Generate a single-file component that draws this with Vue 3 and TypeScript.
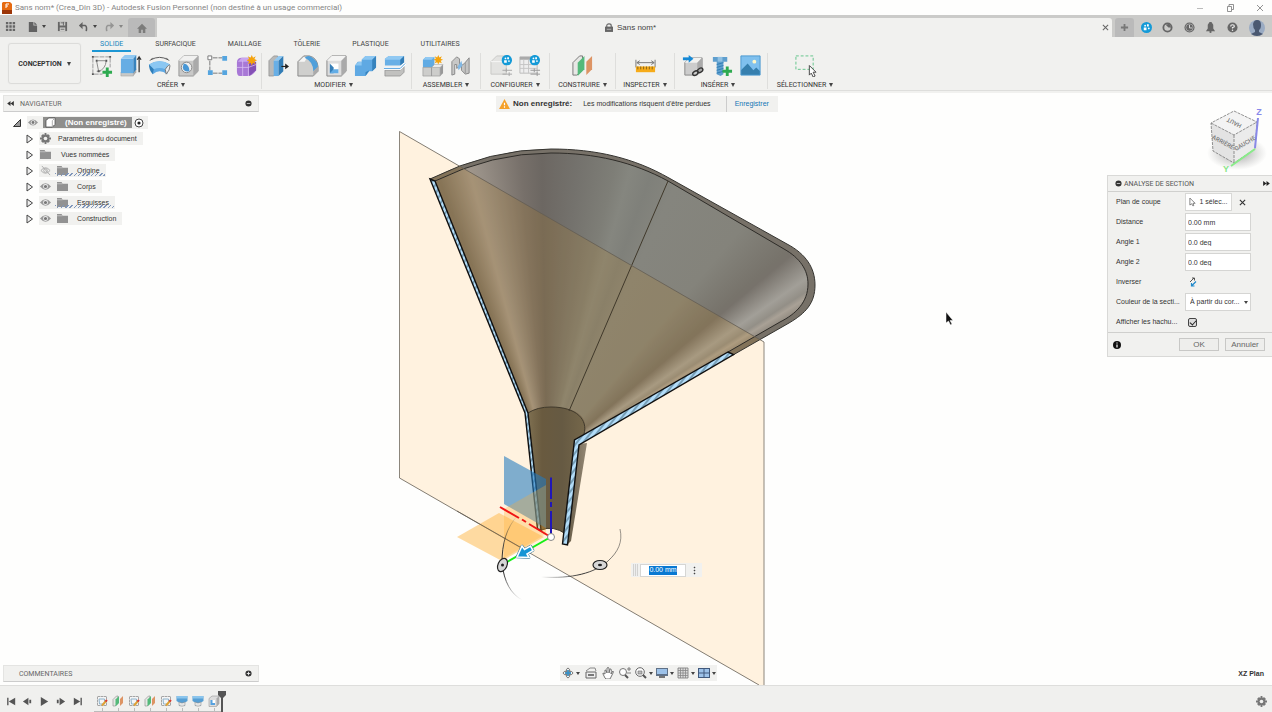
<script setup lang="ts">
import { ref } from 'vue'

interface RibbonGroup { name: string; cls: string; icons: string[] }
interface TreeRow { label: string; icon?: string; eye?: 'on' | 'off'; hatched?: boolean }

const ribbonTabs = ['SOLIDE', 'SURFACIQUE', 'MAILLAGE', 'TÔLERIE', 'PLASTIQUE', 'UTILITAIRES']
const activeTab = ref('SOLIDE')

const groups: RibbonGroup[] = [
  { name: 'CRÉER', cls: 'g6', icons: ['sketch', 'extrude', 'revolve', 'hole', 'pattern', 'form'] },
  { name: 'MODIFIER', cls: 'g5', icons: ['presspull', 'fillet', 'shell', 'combine', 'split'] },
  { name: 'ASSEMBLER', cls: 'g2', icons: ['component', 'joint'] },
  { name: 'CONFIGURER', cls: 'g2', icons: ['config', 'configtable'] },
  { name: 'CONSTRUIRE', cls: 'g1', icons: ['plane'] },
  { name: 'INSPECTER', cls: 'g1 small', icons: ['measure'] },
  { name: 'INSÉRER', cls: 'g3', icons: ['derive', 'bolt', 'image'] },
  { name: 'SÉLECTIONNER', cls: 'g1 large', icons: ['select'] },
]

const tree: TreeRow[] = [
  { label: 'Paramètres du document', icon: 'gear' },
  { label: 'Vues nommées', icon: 'folder' },
  { label: 'Origine', icon: 'folder', eye: 'off', hatched: true },
  { label: 'Corps', icon: 'folder', eye: 'on' },
  { label: 'Esquisses', icon: 'folder', eye: 'on', hatched: true },
  { label: 'Construction', icon: 'folder', eye: 'on' },
]

const navTools = [
  { id: 'orbit', label: 'Orbite', caret: true },
  { id: 'lookat', label: 'Regarder', caret: false },
  { id: 'hand', label: 'Panoramique', caret: false },
  { id: 'zoom', label: 'Zoom', caret: false },
  { id: 'fit', label: 'Ajuster', caret: true },
  { id: 'display', label: 'Affichage', caret: true },
  { id: 'grid', label: 'Grille', caret: true },
  { id: 'views', label: 'Fenêtres', caret: true },
]

const players = ['first', 'prev', 'play', 'next', 'last']
const features = ['t-sketch', 'plane', 't-sketch', 'plane', 't-sketch', 't-loft', 't-loft', 't-shell']

const distance = ref('0.00 mm')
const angle1 = ref('0.0 deg')
const angle2 = ref('0.0 deg')
const hatch = ref(true)
</script>

<template>
  <div class="app">
    <svg class="defs" width="0" height="0" aria-hidden="true">
      <defs>
        <symbol id="sketch" viewBox="0 0 24 24">
          <path d="M4 3H20M3 4V20M21 4V14M4 21H13" fill="none" stroke="#999" stroke-dasharray="5 1" />
          <path d="M2 2h2v2h-2zM20 2h2v2h-2zM2 20h2v2h-2z" fill="#555" />
          <path d="M7 8L9 18Q16 16 17 7M7 18H11M8 7H16" fill="none" stroke="#888" />
          <path d="M6 6h2v2h-2zM16 6h2v2h-2zM8 17h2v2h-2z" fill="#555" />
          <path d="M18 14V24M13 19H23" stroke="#2eaa50" stroke-width="3" />
        </symbol>
        <symbol id="extrude" viewBox="0 0 24 24">
          <path d="M2 19H15V23H2z" fill="#c9c9c7" stroke="#999" stroke-width=".5" />
          <path d="M15 19L18 15V19L15 23z" fill="#aaa" />
          <path d="M2 5H15V20H2z" fill="#66ade4" /><path d="M2 5L6 1H18L15 5z" fill="#91c9f2" /><path d="M15 5L18 1V16L15 20z" fill="#3783bd" />
          <path d="M21 19V4M19 6L21 3L23 6" fill="none" stroke="#333" stroke-width="1.300" />
        </symbol>
        <symbol id="revolve" viewBox="0 0 24 24">
          <path d="M1 11Q12 4 23 11L20 21Q12 15 5 21z" fill="#60aae4" /><path d="M1 11Q12 4 23 11L18 16Q12 13 6 16z" fill="#8bc7f2" />
          <path d="M1 11L6 16L5 21Q1 17 1 11" fill="#2f7eb9" /><path d="M18 16Q22 10 23 12Q23 17 19 21z" fill="#eee" stroke="#777" />
          <path d="M3 6Q12 1 21 6M5 4L2 7M19 4L22 7" fill="none" stroke="#555" />
        </symbol>
        <symbol id="hole" viewBox="0 0 24 24">
          <path d="M2 7L7 2H22V18L17 23H2z" fill="#c9c9c8" stroke="#999" /><path d="M2 7L7 2H22L17 7z" fill="#f1f1f0" /><path d="M17 7L22 2V18L17 23z" fill="#aaa" />
          <circle cx="10" cy="14" r="5.500" fill="#eee" stroke="#888" /><path d="M7 10Q13 11 13 18Q7 19 6 14z" fill="#4897d5" />
        </symbol>
        <symbol id="pattern" viewBox="0 0 24 24">
          <path d="M7 4H17M4 7V17M7 20H17" stroke="#777" stroke-dasharray="5 1" />
          <path d="M2 2H6V6H2z" fill="#fff" stroke="#777" /><path d="M17 2H22V7H17zM2 17H7V22H2zM17 17H22V22H17z" fill="#55a5df" />
        </symbol>
        <symbol id="form" viewBox="0 0 24 24">
          <path d="M2 9Q2 4 7 4H17L22 9V17Q18 23 13 23H5Q2 23 2 18z" fill="#a878d6" /><path d="M3 8L7 4H17L13 8z" fill="#c9a6ef" /><path d="M14 9L22 8V17L15 23z" fill="#8451b5" />
          <path d="M2 14H14L22 11M8 7V23M14 9V23" fill="none" stroke="#d9bff2" stroke-width=".800" />
          <use href="#star" x="12" y="1" width="11" height="11" />
        </symbol>
        <symbol id="star" viewBox="0 0 12 12"><path d="M6 0L7.400 3.300L10.500 1.500L9 4.700L12 6L9 7.400L10.500 10.500L7.400 9L6 12L4.700 9L1.500 10.500L3 7.400L0 6L3 4.700L1.500 1.500L4.700 3.300z" fill="#f5a30b" /></symbol>
        <symbol id="presspull" viewBox="0 0 24 24">
          <path d="M2 7L7 2H11V18L7 23H2z" fill="#b9b9b8" stroke="#888" stroke-width=".700" /><path d="M7 7H12V23H7z" fill="#68afe6" /><path d="M7 7L12 2H17L12 7z" fill="#91c9f2" /><path d="M12 7L17 2V18L12 23z" fill="#327db6" />
          <path d="M15 13H20" stroke="#222" stroke-width="1.200" /><path d="M19 10L23 13L19 16z" fill="#222" />
        </symbol>
        <symbol id="fillet" viewBox="0 0 24 24">
          <path d="M2 8L8 2H14Q22 4 23 13V18L18 23H2z" fill="#cfcfcd" stroke="#888" /><path d="M3 8L8 3H13Q10 5 9 8z" fill="#f6f6f5" />
          <path d="M9 4Q12 1 16 3Q23 7 23 14L18 18Q18 8 9 4" fill="#4f9fda" /><path d="M18 18L23 13V18L18 23z" fill="#aaa" />
        </symbol>
        <symbol id="shell" viewBox="0 0 24 24">
          <path d="M2 7L7 2H22V18L17 23H2z" fill="#ddd" stroke="#888" /><path d="M2 7L7 2H22L17 7z" fill="#f4f4f3" /><path d="M17 7L22 2V18L17 23z" fill="#aaa" />
          <path d="M5 10H14V20H5z" fill="#fff" /><path d="M5 10L9 14V20H5z" fill="#367fb8" /><path d="M9 16H14V20H5z" fill="#63ade6" />
        </symbol>
        <symbol id="combine" viewBox="0 0 24 24">
          <path d="M1 12L4 8H8V6L12 2H23V14L19 18H16L12 23H1z" fill="#5fa9e3" /><path d="M8 6L12 2H23L19 6zM1 12L5 8H8V12z" fill="#8cc7f2" /><path d="M19 6L23 2V14L19 18zM12 19L16 17L12 23z" fill="#3783bd" />
        </symbol>
        <symbol id="split" viewBox="0 0 24 24">
          <path d="M2 5L6 2H22V8L18 12H2z" fill="#68afe6" /><path d="M2 5L6 2H22L18 6H2z" fill="#91c9f2" /><path d="M18 6L22 2V9L18 12z" fill="#327db6" />
          <path d="M2 17H18L22 13V19L18 23H2z" fill="#c1c1bf" stroke="#888" stroke-width=".700" /><path d="M1 15H18L23 10" stroke="#fff" stroke-width="3" fill="none" /><path d="M1 15H18L23 10" stroke="#4b9ddb" fill="none" />
        </symbol>
        <symbol id="component" viewBox="0 0 24 24">
          <path d="M2 6L5 3H14V12L12 14H2z" fill="#60abe4" /><path d="M2 6L5 3H14L11 6z" fill="#91c9f2" />
          <path d="M2 14H11V23H2zM11 14H20V23H11z" fill="#cdcdcb" stroke="#999" stroke-width=".700" /><path d="M11 14L14 11H23L20 14z" fill="#eee" stroke="#999" stroke-width=".500" /><path d="M20 14L23 11V20L20 23z" fill="#999" />
          <use href="#star" x="13" y="1" width="10" height="10" />
        </symbol>
        <symbol id="joint" viewBox="0 0 24 24">
          <path d="M3 8L8 3L11 5V13L8 15V11L6 11V21L3 22z" fill="#c8c8c7" stroke="#888" /><path d="M21 4V20L17 21L13 17V12L16 10z" fill="#c4c4c3" stroke="#888" /><path d="M9 13L13 7L14 12L10 17z" fill="#83b9e5" /><path d="M17 9V20" stroke="#999" />
        </symbol>
        <symbol id="badge" viewBox="0 0 12 12"><circle cx="6" cy="6" r="6" fill="#149ad7" /><path d="M3 6H6V9H3zM6.500 2.500H8.500V5H6.500z" fill="#fff" /><circle cx="8.500" cy="7" r="1" fill="#fff" /><circle cx="4.500" cy="4" r="1" fill="#fff" /></symbol>
        <symbol id="config" viewBox="0 0 24 24">
          <path d="M1 8L7 2H20L17 7V21H1z" fill="#e3e3e1" stroke="#c9c9c7" /><path d="M1 8H17" stroke="#f8f8f8" /><path d="M13 17H23M13 21H23M17 15V19M20 19V23" stroke="#a6a6a6" /><use href="#badge" x="12" y="1" width="11" height="11" />
        </symbol>
        <symbol id="configtable" viewBox="0 0 24 24">
          <path d="M2 3H20V20H2z" fill="#eee" stroke="#bbb" /><path d="M2 3H20V6H2z" fill="#aaa" /><path d="M6 6V20M2 11H20M2 15H20M11 6V20" stroke="#c4c4c4" /><path d="M13 17H23M13 21H23M17 15V19M20 19V23" stroke="#999" /><use href="#badge" x="12" y="1" width="11" height="11" />
        </symbol>
        <symbol id="plane" viewBox="0 0 24 24">
          <path d="M2 9L9 2H12V17L6 22H2z" fill="#e7e7e5" stroke="#777" /><path d="M7 9L14 2V16L7 23z" fill="#54b97a" /><path d="M16 8L22 2V16L16 22z" fill="#dd9464" />
        </symbol>
        <symbol id="measure" viewBox="0 0 24 24"><path d="M2 6V14M22 6V14M3 9H21M6 7L3 9L6 11M18 7L21 9L18 11" fill="none" stroke="#777" /><path d="M2 13H22V19H2z" fill="#f6ab19" /><path d="M4 13V16M7 13V16M10 13V16M13 13V16M16 13V16M19 13V16" stroke="#8a6515" /></symbol>
        <symbol id="derive" viewBox="0 0 24 24">
          <path d="M4 9L9 4H22V15L17 22H4z" fill="#ccc" stroke="#888" /><path d="M4 9L9 4H22L17 9z" fill="#f2f2f0" /><path d="M17 9L22 4V16L17 22z" fill="#aaa" />
          <path d="M2 5H9" stroke="#1689d5" stroke-width="3" /><path d="M8 1L13 5L8 9z" fill="#1689d5" />
          <ellipse cx="15" cy="20" rx="3" ry="2" transform="rotate(-35 15 20)" fill="none" stroke="#333" stroke-width="1.500" /><ellipse cx="20" cy="17" rx="3" ry="2" transform="rotate(-35 20 17)" fill="none" stroke="#333" stroke-width="1.500" />
        </symbol>
        <symbol id="bolt" viewBox="0 0 24 24"><path d="M3 3H18V8H14V21L11 23L7 21V8H3z" fill="#5f9fce" /><path d="M8 3H13V8H8z" fill="#91c1e3" /><path d="M7 11L14 9M7 14L14 12M7 17L14 15M7 20L14 18" stroke="#2f7cb4" /><path d="M18 13V23M13 18H23" stroke="#2eaa50" stroke-width="3" /></symbol>
        <symbol id="image" viewBox="0 0 24 24"><path d="M2 2H22V22H2z" fill="#7fc0ee" /><path d="M2 17L9 10L15 17L18 14L22 18V22H2z" fill="#367fae" /><circle cx="16" cy="8" r="2" fill="#fff7c8" /><path d="M2 2H22V22H2z" fill="none" stroke="#4a98cf" /></symbol>
        <symbol id="select" viewBox="0 0 24 24"><path d="M2 2H20V16H2z" fill="none" stroke="#62c48a" stroke-dasharray="3 2" /><path d="M16 12V22L18 20L20 24L22 23L20 19H23z" fill="#fff" stroke="#444" /></symbol>
        <symbol id="file" viewBox="0 0 12 12"><path d="M2 1H7V5H11V12H2z" fill="#626262" /><path d="M8 1L11 4H8z" fill="#626262" /></symbol>
        <symbol id="apps" viewBox="0 0 12 12"><path d="M1 1h2.600v2.600H1zM4.700 1h2.600v2.600H4.700zM8.400 1H11v2.600H8.400zM1 4.700h2.600v2.600H1zM4.700 4.700h2.600v2.600H4.700zM8.400 4.700H11v2.600H8.400zM1 8.400h2.600V11H1zM4.700 8.400h2.600V11H4.700zM8.400 8.400H11V11H8.400z" fill="#666" /></symbol>
        <symbol id="save" viewBox="0 0 12 12"><path d="M1 1H11V11H1z" fill="#666" /><path d="M3 1H9V5H3zM3 7H9V11H3z" fill="#cbcbc9" /><path d="M4 2H8M4 9H8M7 1V5" stroke="#666" /></symbol>
        <symbol id="undo" viewBox="0 0 12 12"><path d="M2 5H8Q10 6 9 11" fill="none" stroke="currentColor" stroke-width="1.700" /><path d="M1 5L5 1V9z" fill="currentColor" /></symbol>
        <symbol id="home" viewBox="0 0 12 12"><path d="M0 7L6 1L12 7H10V12H7V8H5V12H2V7z" fill="#7c7c7b" /></symbol>
        <symbol id="gear" viewBox="0 0 12 12"><path d="M5 0H7V2L9 1.300L10.700 3L10 5H12V7H10L10.700 9L9 10.700L7 10V12H5V10L3 10.700L1.300 9L2 7H0V5H2L1.300 3L3 1.300L5 2z" fill="#777" /><circle cx="6" cy="6" r="2" fill="#f0f0ee" /></symbol>
        <symbol id="folder" viewBox="0 0 12 12"><path d="M0 1H5L6 3H12V11H0z" fill="#929292" /><path d="M0 3H6" stroke="#c4c4c4" /></symbol>
        <symbol id="eye" viewBox="0 0 12 12"><path d="M0 6Q6 -1 12 6Q6 13 0 6" fill="#999" /><circle cx="6" cy="6" r="2.700" fill="#eee" /><circle cx="6" cy="6" r="1.700" fill="#777" /></symbol>
        <symbol id="eyeoff" viewBox="0 0 12 12"><path d="M1 6Q6 0 11 6Q6 12 1 6" fill="none" stroke="#aaa" /><circle cx="6" cy="6" r="2" fill="none" stroke="#aaa" /><path d="M2 1L11 11" stroke="#aaa" /></symbol>
        <symbol id="orbit" viewBox="0 0 12 12"><ellipse cx="6" cy="6" rx="5" ry="2" fill="none" stroke="#777" /><ellipse cx="6" cy="6" rx="2" ry="5" fill="none" stroke="#777" /><path d="M6 3V9M3 6H9" stroke="#268bc7" stroke-width="1.400" /></symbol>
        <symbol id="lookat" viewBox="0 0 12 12"><path d="M1 5H11V11H1z" fill="#eee" stroke="#666" /><path d="M3 7H9V9H3z" fill="#777" /><path d="M1 4L5 1H10L11 4" fill="none" stroke="#888" /></symbol>
        <symbol id="hand" viewBox="0 0 12 12"><path d="M3 11L1 7Q0 5 3 7L3 3Q4 2 5 6L5 1Q6 0 7 1V6L8 2Q10 1 9 7L11 4Q12 5 10 8L8 12H4z" fill="#fff" stroke="#666" stroke-width=".900" /></symbol>
        <symbol id="zoom" viewBox="0 0 12 12"><circle cx="4" cy="5" r="3.500" fill="#fff" stroke="#777" /><path d="M6 8L9 11" stroke="#555" stroke-width="2" /><path d="M10 0V4M8 2H12M8 6H12" stroke="#666" stroke-width=".800" /></symbol>
        <symbol id="fit" viewBox="0 0 12 12"><circle cx="5" cy="5" r="4.300" fill="#fff" stroke="#666" /><path d="M3 4H7V7H3z" fill="#bbb" stroke="#777" stroke-width=".700" /><path d="M8 8L11 11" stroke="#555" stroke-width="2" /></symbol>
        <symbol id="display" viewBox="0 0 12 12"><path d="M0 1H12V9H0z" fill="#5f7188" /><path d="M1 2H11V7H1z" fill="#9dc2e9" /><path d="M3 11H9V9H3z" fill="#777" /></symbol>
        <symbol id="grid" viewBox="0 0 12 12"><path d="M1 1H11V11H1z" fill="#ddd" stroke="#777" stroke-width=".800" /><path d="M3.500 1V11M6 1V11M8.500 1V11M1 3.500H11M1 6H11M1 8.500H11" stroke="#888" stroke-width=".800" /></symbol>
        <symbol id="views" viewBox="0 0 12 12"><path d="M0 1H12V11H0z" fill="#41597c" /><path d="M1 2H5.500V5.500H1zM6.500 2H11V5.500H6.500zM1 6.500H5.500V10H1zM6.500 6.500H11V10H6.500z" fill="#9dc2e9" /></symbol>
        <symbol id="first" viewBox="0 0 12 12"><path d="M2 2V10" stroke="#555" stroke-width="1.500" /><path d="M10 2V10L3 6z" fill="#555" /></symbol>
        <symbol id="prev" viewBox="0 0 12 12"><path d="M7 2V10L1 6zM8 4H10V8H8z" fill="#555" /></symbol>
        <symbol id="play" viewBox="0 0 12 12"><path d="M2 1L10 6L2 11z" fill="#555" /></symbol>
        <symbol id="next" viewBox="0 0 12 12"><path d="M5 2V10L11 6zM2 4H4V8H2z" fill="#555" /></symbol>
        <symbol id="last" viewBox="0 0 12 12"><path d="M10 2V10" stroke="#555" stroke-width="1.500" /><path d="M2 2V10L9 6z" fill="#555" /></symbol>
        <symbol id="t-sketch" viewBox="0 0 24 24"><path d="M3 3H21V21H3z" fill="#f5f5f5" stroke="#a5a5a5" stroke-width="2" stroke-dasharray="5 1" /><path d="M6 8H17V18H7z" fill="none" stroke="#8db3cc" stroke-width="2" /><path d="M12 21L20 12" stroke="#e0a235" stroke-width="4" /><path d="M19 13L22 10" stroke="#d93b32" stroke-width="4" /></symbol>
        <symbol id="t-loft" viewBox="0 0 24 24"><path d="M1 2H23V12L18 15V22H6V15L1 12z" fill="#579fd4" /><path d="M2 2H22V7H2z" fill="#8bc5ed" /><path d="M6 14Q12 18 18 14V21Q12 24 6 21z" fill="#e5e5e5" stroke="#888" /></symbol>
        <symbol id="t-shell" viewBox="0 0 24 24"><path d="M2 7L8 2H22V17L17 23H2z" fill="#ddd" stroke="#888" /><path d="M17 7L22 2V18L17 23z" fill="#aaa" /><path d="M5 10H14V20H5z" fill="#56a2df" /><path d="M9 10H14V16H9z" fill="#fff" /></symbol>
      </defs>
    </svg>

    <header class="titlebar">
      <svg class="applogo" viewBox="0 0 10 12"><path d="M1 0H8L10 2V12H0V1z" fill="#e66a10" /><path d="M0 8H10V12H0z" fill="#9c3507" /><path d="M4 6V2H7M4 4H6" stroke="#fff" fill="none" /></svg>
      <span class="title">Sans nom* (Crea_Din 3D) - Autodesk Fusion Personnel (non destiné à un usage commercial)</span>
      <span class="winctl">
        <button aria-label="Réduire"><svg viewBox="0 0 8 8"><path d="M1 4.500H7" stroke="#bbb" /></svg></button>
        <button aria-label="Restaurer"><svg viewBox="0 0 8 8"><path d="M1.500 2.500H5.500V7.500H1.500zM3 2V.500H7.500V5.500H6" fill="none" stroke="#777" stroke-width=".800" /></svg></button>
        <button aria-label="Fermer"><svg viewBox="0 0 8 8"><path d="M1 1L7 7M7 1L1 7" stroke="#777" stroke-width=".800" /></svg></button>
      </span>
    </header>

    <div class="docbar">
      <div class="quick">
        <button class="q q1" aria-label="Données"><svg><use href="#apps" /></svg></button>
        <button class="q q2" aria-label="Fichier"><svg><use href="#file" /></svg><i class="caret"></i></button>
        <button class="q q3" aria-label="Enregistrer"><svg><use href="#save" /></svg></button>
        <button class="q q4" aria-label="Annuler l’action"><svg><use href="#undo" /></svg><i class="caret"></i></button>
        <button class="q q4 off" aria-label="Rétablir"><svg class="flip"><use href="#undo" /></svg><i class="caret"></i></button>
        <button class="hometab" aria-label="Accueil"><svg><use href="#home" /></svg></button>
      </div>
      <div class="doctab">
        <span class="docname">
          <svg viewBox="0 0 9 10"><path d="M2 5V3Q2 1 4.500 1Q7 1 7 3V5" fill="none" stroke="#666" stroke-width="1.300" /><path d="M0 4H9V10H0z" fill="#666" /><path d="M2 7H7" stroke="#bbb" /></svg>
          Sans nom*
        </span>
        <button class="closedoc" aria-label="Fermer le document"><svg viewBox="0 0 8 8"><path d="M1 1L7 7M7 1L1 7" stroke="#666" stroke-width="1.200" /></svg></button>
      </div>
      <div class="account">
        <button class="newtab" aria-label="Nouveau"><svg viewBox="0 0 10 10"><path d="M5 1V9M1 5H9" stroke="#777" stroke-width="2" /></svg></button>
        <button aria-label="Extensions"><svg><use href="#badge" /></svg></button>
        <button aria-label="Synchronisation"><svg viewBox="0 0 12 12"><circle cx="6" cy="6" r="4.500" fill="none" stroke="#666" stroke-width="2" /><path d="M4 3L8 2L10 6L7 6z" fill="#666" /></svg></button>
        <button aria-label="Historique"><svg viewBox="0 0 12 12"><circle cx="6" cy="6" r="5.500" fill="#666" /><circle cx="6" cy="6" r="4" fill="none" stroke="#bbb" stroke-width=".700" /><path d="M6 3V6.500H9" fill="none" stroke="#ddd" /></svg></button>
        <button aria-label="Notifications"><svg viewBox="0 0 12 12"><path d="M5 0H7L9 3V7L11 10H1L3 7V3z" fill="#666" /><circle cx="6" cy="10.800" r="1.200" fill="#666" /></svg></button>
        <button aria-label="Aide"><svg viewBox="0 0 12 12"><circle cx="6" cy="6" r="5.500" fill="#666" /><path d="M4 5Q4 3 6 3Q8 3 8 4.500Q8 5.500 6 6V7" fill="none" stroke="#eee" stroke-width="1.300" /><circle cx="6" cy="9" r=".800" fill="#eee" /></svg></button>
        <button class="avatar" aria-label="Compte"><svg viewBox="0 0 16 16"><circle cx="8" cy="8" r="8" fill="#9aabc3" /><path d="M4 4Q5 0 8 0Q12 0 12 5Q12 9 10 10V12L14 14Q11 16 8 16Q5 16 2 14L6 12V10Q4 8 4 4" fill="#4a5871" /></svg></button>
      </div>
    </div>

    <section class="ribbon">
      <button class="workspace">CONCEPTION <i class="caret"></i></button>
      <div class="tools">
        <nav class="tabs">
          <button v-for="t in ribbonTabs" :key="t" :class="{ active: t === activeTab }" @click="activeTab = t">{{ t }}</button>
        </nav>
        <div class="groups">
          <div v-for="g in groups" :key="g.name" class="group" :class="g.cls">
            <div class="icons">
              <button v-for="ic in g.icons" :key="ic" :aria-label="ic"><svg><use :href="'#' + ic" /></svg></button>
            </div>
            <button class="gname">{{ g.name }} <i class="caret"></i></button>
          </div>
        </div>
      </div>
    </section>

    <main class="viewport">
      <svg class="scene" viewBox="0 93 1272 592" aria-label="Vue en coupe de l’entonnoir">
        <defs>
          <clipPath id="innerClip"><path d="M435 181Q492 153 551 153C595 153 633 162 668 181L784 249C800 258 808 270 808 284C808 302 796 314 780 322L728 352L582 438C591 422 583 407 551 407Q537 407 528 413z" /></clipPath>
          <clipPath id="bodyClip"><path d="M430 179Q490 149 551 149C596 149 634 158 669 178L787 244C806 254 815 268 815 285C815 303 806 313 789 323L733 355L579 445L528 413L525 413z" /></clipPath>
          <linearGradient id="neck" x1="0" x2="1"><stop offset="0" stop-color="#7f7051" /><stop offset=".250" stop-color="#695a3f" /><stop offset=".600" stop-color="#665a43" /><stop offset="1" stop-color="#75674a" /></linearGradient>
          <linearGradient id="outer" x1="0" x2="1"><stop offset="0" stop-color="#675c47" /><stop offset="1" stop-color="#948875" /></linearGradient>
          <linearGradient id="arcFade" x1="0" y1="0" x2="0" y2="1"><stop offset="0" stop-color="#333" stop-opacity="0" /><stop offset=".400" stop-color="#333" /><stop offset=".700" stop-color="#333" /><stop offset="1" stop-color="#333" stop-opacity="0" /></linearGradient>
          <linearGradient id="arcFade2" x1="0" y1="0" x2="1" y2="0"><stop offset="0" stop-color="#333" stop-opacity="0" /><stop offset=".500" stop-color="#333" /><stop offset="1" stop-color="#333" stop-opacity=".500" /></linearGradient>
          <radialGradient id="cubeShadow"><stop offset="0" stop-color="#777" stop-opacity=".700" /><stop offset="1" stop-color="#999" stop-opacity="0" /></radialGradient>
          <pattern id="hatchFill" width="12" height="5" patternUnits="userSpaceOnUse" patternTransform="rotate(-52)"><path d="M0 0H12V5H0z" fill="#b2dcf8" /><path d="M0 2H12" stroke="#315369" stroke-width=".900" /></pattern>
        </defs>

        <path d="M399.500 131.500L764 342V685L759 685L399.500 478z" fill="#fff2df" />
        <path d="M399.500 131.500V478M764 342V685" stroke="#8c867c" fill="none" />

        <path d="M430 179Q490 149 551 149C596 149 634 158 669 178L787 244C806 254 815 268 815 285C815 303 806 313 789 323L733 355L728 352L570 440L525 413z" fill="#777168" />
        <foreignObject x="420" y="93" width="400" height="370" clip-path="url(#innerClip)"><div xmlns="http://www.w3.org/1999/xhtml" class="cone"></div></foreignObject>
        <path d="M399.500 131.500L764 342V470H520L425 179z" fill="#c8820f" fill-opacity=".160" clip-path="url(#bodyClip)" />
        <path d="M528 413Q537 407 551 407C577 407 588 420 584 434L575 441L565 534Q553 525 541 531z" fill="url(#neck)" />
        <path d="M578 444L587 443L571 541L567 545z" fill="url(#outer)" />
        <path d="M430 179Q490 149 551 149C596 149 634 158 669 178L787 244C806 254 815 268 815 285C815 303 806 313 789 323L733 355" fill="none" stroke="#353430" />
        <path d="M435 181Q492 153 551 153C595 153 633 162 668 181L784 249C800 258 808 270 808 284C808 302 796 314 780 322L728 352" fill="none" stroke="#2e2c28" />
        <path d="M668 181L569 411M528 413Q537 407 551 407C577 407 588 420 584 434L581 438M541 530Q553 525 566 534" fill="none" stroke="#40392b" />
        <path d="M399.500 131.500L764 342M399.500 478L759 685" fill="none" stroke="#635d53" stroke-width=".800" />
        <path d="M430 179L435 181L528 413L541 530L537.500 529L525 413z" fill="url(#hatchFill)" stroke="#101010" stroke-width="1.400" />
        <path d="M728 352L733.500 354.500L579 445L567.500 545L562.500 544L574.500 440z" fill="url(#hatchFill)" stroke="#101010" stroke-width="1.400" />

        <path d="M504 456L546 479V528L504 504z" fill="#237ac0" fill-opacity=".580" />
        <path d="M504 509L546 485V534L504 558z" fill="#ffac2d" fill-opacity=".300" />
        <path d="M457 537L499 513L544 537L502 561z" fill="#ffb43c" fill-opacity=".480" />
        <path d="M457 511L520 547" stroke="#635d53" stroke-width=".800" />
        <path d="M500 507L519 518M522 519.500L526 522M529 524L549 536" stroke="#f01414" stroke-width="2" />
        <path d="M551 477.500V499M551 502V507M551 511V534" stroke="#2016b8" stroke-width="2" />
        <path d="M507 562L549 538" stroke="#16ee16" stroke-width="2" />
        <path d="M518 515C506 528 502 544 502 563C504 582 511 594 522 600" fill="none" stroke="url(#arcFade)" />
        <path d="M541 577C572 579 595 573 608 561C618 552 623 542 620 529" fill="none" stroke="url(#arcFade2)" />
        <circle cx="551" cy="537" r="3.500" fill="#fff" stroke="#888" />
        <path d="M517 557L522 546L524.500 549.500L530.500 546L533 550.500L527 554L529 557.500z" fill="#1695d5" stroke="#2e7091" stroke-width="2.600" stroke-linejoin="round" /><path d="M517 557L522 546L524.500 549.500L530.500 546L533 550.500L527 554L529 557.500z" fill="#1695d5" stroke="#fff" stroke-width="1.600" />
        <ellipse cx="502.500" cy="565" rx="4.500" ry="7" transform="rotate(24 502.500 565)" fill="#d7d7d7" stroke="#222" stroke-width="1.200" /><circle cx="502.500" cy="565" r="1.500" fill="#222" />
        <ellipse cx="600" cy="565" rx="7" ry="4.500" fill="#d7d7d7" stroke="#222" stroke-width="1.200" /><ellipse cx="600" cy="565" rx="2" ry="1.300" fill="#222" />

        <path d="M946 312V323L948.500 321L950.500 325L952 324L950 320.500H953z" fill="#111" stroke="#fff" stroke-width=".500" />
      </svg>

      <svg class="cube" viewBox="1202 103 70 72" aria-label="Cube de vue">
        <ellipse cx="1237" cy="153" rx="30" ry="17" fill="url(#cubeShadow)" />
        <path d="M1234 111L1257 122L1234 135L1211 123z" fill="#f3f3f3" /><path d="M1211 123L1234 135V163L1213 151z" fill="#e3e3e3" /><path d="M1234 135L1257 122L1255 149L1234 163z" fill="#ebebeb" />
        <path d="M1234 111L1257 122L1255 149L1234 163L1213 151L1211 123zM1211 123L1234 135L1257 122M1234 135V163" fill="none" stroke="#777" stroke-dasharray="3 1" stroke-width=".800" />
        <path d="M1255 149L1231 166" stroke="#89ec89" stroke-width="2" /><path d="M1258 118L1255 148" stroke="#8989e8" stroke-width="2" />
        <text class="cubetext" transform="translate(1222 144) rotate(29)">ARRIÈRE</text>
        <text class="cubetext" transform="translate(1246 145) rotate(-31)">GAUCHE</text>
        <text class="cubetext" transform="translate(1235 121) rotate(207)">HAUT</text>
        <text class="axis z" x="1259" y="115">Z</text><text class="axis y" x="1226" y="172">Y</text>
      </svg>

      <div class="notice" role="status">
        <svg viewBox="0 0 12 11"><path d="M6 0L12 11H0z" fill="#f5a12a" /><path d="M6 4V7M6 8V9.500" stroke="#fff" stroke-width="1.300" /></svg>
        <strong>Non enregistré:</strong><span>Les modifications risquent d'être perdues</span><a href="#">Enregistrer</a>
      </div>

      <aside class="browser">
        <div class="bar"><svg class="dbl" viewBox="0 0 8 6"><path d="M4 0V6L0 3zM8 0V6L4 3z" fill="#333" /></svg><span>NAVIGATEUR</span><button class="round" aria-label="Réduire le navigateur"><svg viewBox="0 0 8 8"><circle cx="4" cy="4" r="3.500" fill="#333" /><path d="M2 4H6" stroke="#ccc" /></svg></button></div>
        <ul class="tree">
          <li class="root">
            <svg class="tri" viewBox="0 0 8 8"><path d="M7.500 .500V7.500H.500z" fill="#999" stroke="#333" /></svg>
            <span class="pill"><svg class="ic"><use href="#eye" /></svg><span class="rootname"><svg class="cubeic" viewBox="0 0 12 12"><path d="M1 4L4 1H11V8L8 11H1z" fill="#fff" stroke="#555" /><path d="M8 4L11 1M8 4V11" stroke="#aaa" /></svg>(Non enregistré)</span>
              <svg class="radio" viewBox="0 0 10 10"><circle cx="5" cy="5" r="4" fill="#fff" stroke="#444" /><circle cx="5" cy="5" r="1.600" fill="#222" /></svg></span>
          </li>
          <li v-for="r in tree" :key="r.label">
            <svg class="tri" viewBox="0 0 8 10"><path d="M1 1V9L6.500 5z" fill="#eee" stroke="#444" /></svg>
            <span class="pill" :class="{ hatched: r.hatched, folderonly: !r.eye && r.icon === 'folder' }">
              <svg v-if="r.eye" class="ic eye"><use :href="r.eye === 'on' ? '#eye' : '#eyeoff'" /></svg>
              <svg class="ic"><use :href="'#' + r.icon" /></svg><span class="tl">{{ r.label }}</span>
            </span>
          </li>
        </ul>
      </aside>

      <form class="panel" @submit.prevent>
        <div class="phead"><svg viewBox="0 0 8 8"><circle cx="4" cy="4" r="3.500" fill="#333" /><path d="M2 4H6" stroke="#ccc" /></svg><span>ANALYSE DE SECTION</span><svg class="dbl" viewBox="0 0 8 6"><path d="M0 0V6L4 3zM4 0V6L8 3z" fill="#222" /></svg></div>
        <div class="prow"><label for="cut">Plan de coupe</label><button id="cut" type="button" class="pick"><svg viewBox="0 0 8 10"><path d="M1 .500V8.500L3 7L4.500 9.500L5.500 9L4.500 6.500H7z" fill="#fff" stroke="#555" stroke-width=".800" /></svg>1 sélec...</button><button type="button" class="clear" aria-label="Effacer"><svg viewBox="0 0 8 8"><path d="M1 1L7 7M7 1L1 7" stroke="#333" stroke-width="1.300" /></svg></button></div>
        <div class="prow"><label for="dist">Distance</label><input id="dist" v-model="distance" type="text"></div>
        <div class="prow"><label for="a1">Angle 1</label><input id="a1" v-model="angle1" type="text"></div>
        <div class="prow"><label for="a2">Angle 2</label><input id="a2" v-model="angle2" type="text"></div>
        <div class="prow"><label for="inv">Inverser</label><button id="inv" type="button" class="flipbtn" aria-label="Inverser"><svg viewBox="0 0 10 10"><path d="M2 5L6 1M4 1H6.500V3.500" fill="none" stroke="#444" stroke-width=".900" /><path d="M8 4.500L4 8.500M3.500 6V9H6.500" fill="none" stroke="#2189ca" stroke-width="1.200" /></svg></button></div>
        <div class="prow"><label for="col">Couleur de la secti...</label><span class="selwrap"><select id="col"><option>À partir du cor...</option></select><i class="caret"></i></span></div>
        <div class="prow"><label for="hat">Afficher les hachu...</label><input id="hat" v-model="hatch" type="checkbox"></div>
        <div class="pfoot"><svg viewBox="0 0 8 8"><circle cx="4" cy="4" r="4" fill="#111" /><path d="M4 3.500V6.500M4 1.500V2.500" stroke="#fff" stroke-width="1.200" /></svg><button type="submit">OK</button><button type="button">Annuler</button></div>
      </form>

      <div class="valuebox"><i class="grip"></i><label class="valuefield"><input type="text" value="0.00 mm" size="7" aria-label="Distance de coupe"></label><button aria-label="Options"><svg viewBox="0 0 3 9"><path d="M1 1h1v1H1zM1 4h1v1H1zM1 7h1v1H1z" fill="#444" stroke="#444" stroke-width=".500" /></svg></button></div>

      <div class="bar comments"><span>COMMENTAIRES</span><button class="round" aria-label="Ajouter"><svg viewBox="0 0 8 8"><circle cx="4" cy="4" r="3.500" fill="#333" /><path d="M2 4H6M4 2V6" stroke="#eee" /></svg></button></div>

      <div class="navbar"><button v-for="n in navTools" :key="n.id" :class="{ wide: n.caret }" :aria-label="n.label"><svg><use :href="'#' + n.id" /></svg><i v-if="n.caret" class="caret"></i></button></div>
      <strong class="planelabel">XZ Plan</strong>
    </main>

    <footer class="timeline">
      <div class="play"><button v-for="p in players" :key="p" :aria-label="p"><svg><use :href="'#' + p" /></svg></button></div>
      <div class="features"><button v-for="(f, i) in features" :key="i" :aria-label="'Fonction ' + (i + 1)"><svg><use :href="'#' + f" /></svg></button>
        <svg class="marker" viewBox="0 0 8 21"><path d="M0 0H8V4L5 7H3L0 4z" fill="#555" /><path d="M4 6V21" stroke="#555" stroke-width="2" /></svg></div>
      <button class="settings" aria-label="Préférences"><svg><use href="#gear" /></svg></button>
    </footer>
  </div>
</template>

<style>
html, body { margin: 0; background: #fff; }
</style>

<style scoped>
.app { height: 100vh; min-height: 500px; display: flex; flex-direction: column; overflow: hidden; background: #fefefd; color: #333; font: 7px/12px "Liberation Sans", Arial, sans-serif; }
.app * { box-sizing: border-box; }
.defs { position: absolute; }
button, input, select { font: inherit; color: inherit; margin: 0; padding: 0; border: 0; background: none; border-radius: 0; min-width: 0; }
button { display: flex; align-items: center; justify-content: center; white-space: nowrap; }
svg { display: block; flex: none; }
.caret { width: 0; height: 0; border: 2px solid transparent; border-top: 3px solid #444; border-bottom: 0; flex: none; }

.titlebar { height: 15px; display: flex; align-items: center; padding: 0 2px; flex: none; }
.applogo { width: 10px; height: 12px; margin-right: 3px; }
.title { flex: 1; font: 8px/14px Roboto, "Noto Sans", sans-serif; color: #858585; white-space: nowrap; }
.winctl { display: flex; gap: 22px; padding-right: 6px; }
.winctl svg { width: 8px; height: 8px; }

.docbar { height: 22px; padding-top: 3px; display: grid; grid-template-columns: 157px 1fr 160px; background: #cbcbc9; flex: none; }
.quick { display: flex; align-items: stretch; padding-left: 3px; }
.q svg { width: 11px; height: 11px; color: #606060; }
.q { gap: 4px; padding-bottom: 2px; }
.q1 { width: 15px; } .q2 { width: 27px; margin-left: 5px; } .q3 { width: 23px; margin-left: 1px; } .q4 { width: 26px; }
.q.off { opacity: .5; }
.flip { transform: scaleX(-1); }
.hometab { width: 27px; margin-left: 2px; background: #bababa; border-radius: 3px 3px 0 0; }
.hometab svg { width: 10px; height: 10px; }
.doctab { background: #f1f1ef; border-radius: 0 3px 0 0; display: grid; grid-template-columns: 1fr 14px; align-items: center; }
.docname { display: flex; gap: 4px; align-items: center; justify-content: center; font-size: 8px; color: #444; padding-left: 6px; }
.docname svg { width: 8px; height: 9px; }
.closedoc svg { width: 7px; height: 7px; }
.account { display: flex; align-items: center; padding-left: 3px; }
.account button { width: 22px; height: 16px; }
.account svg { width: 11px; height: 11px; }
.account .newtab { width: 19px; height: 19px; background: #bababa; border-radius: 3px 3px 0 0; margin-right: 2px; }
.account .newtab svg { width: 9px; height: 9px; }
.account .avatar { width: 30px; }
.account .avatar svg { width: 16px; height: 16px; }

.ribbon { height: 56px; display: flex; background: #f1f1ef; border-bottom: 2px solid #f1f1ef; box-shadow: inset 0 -1px #dededc; flex: none; font-family: Roboto, "Open Sans", sans-serif; }
.ribbon .caret { border-top-width: 4px; }
.workspace { width: 73px; height: 41px; margin: 6px 6px 0 8px; border: 1px solid #dcdcda; border-radius: 3px; font-weight: 700; gap: 5px; box-shadow: 0 0 1px #ddd; }
.tabs { display: flex; gap: 16px; padding-left: 5px; height: 15px; }
.tabs button { padding: 1px 8px 0; border-bottom: 2px solid transparent; color: #444; }
.tabs .active { color: #1583bd; border-color: #1d97d4; }
.groups { display: flex; }
.group { border-right: 1px solid #dededc; height: 36px; margin-top: 1px; flex: none; }
.group:last-child { border: 0; }
.icons { display: flex; justify-content: center; height: 24px; }
.icons button { width: 28px; height: 24px; }
.icons svg { width: 23px; height: 23px; }
.gname { width: 100%; height: 12px; gap: 3px; line-height: 12px; margin-top: 1px; padding: 1px 6px 0 0; }
.g1 .gname { padding-right: 0; }
.g6 { width: 175px; } .g5 { width: 150px; } .g3 { width: 93px; } .g2 { width: 69px; } .g1 { width: 66px; } .g1.small { width: 59px; } .g1.large { width: 74px; }
.g2 .gname { padding-right: 0; }
.g6 .icons, .g5 .icons, .g3 .icons { gap: 1px; }

.viewport { flex: 1; position: relative; overflow: hidden; min-height: 0; }
.scene { position: absolute; inset: 0; width: 100%; height: 100%; }
.cone { width: 400px; height: 370px; background: conic-gradient(from -30deg at 127px 367px, #7a7164 0deg, #7b7265 9deg, #a0968b 15deg, #989087 17deg, #77706a 25deg, #6c6762 29deg, #74726d 36deg, #7e7e77 43deg, #85867f 46deg, #7f807a 50deg, #85857e 55deg, #84837b 70deg, #77736b 79deg, #77726b 80deg, #a29f98 85deg, #938f87 87deg, #a9a196 88deg, #79736a 91deg, #79736a 360deg); }
.cube { position: absolute; right: 0; top: 10px; width: 70px; height: 72px; }
.cubetext { font: 500 6px Roboto, sans-serif; fill: #777; text-anchor: middle; }
.axis { font: bold 9px "Liberation Sans", sans-serif; text-anchor: middle; }
.axis.z { fill: #8888ea; } .axis.y { fill: #87e687; }

.notice { position: absolute; left: 39%; top: 3px; height: 16px; display: flex; align-items: center; background: #f1f1ef; padding: 0 9px 0 3px; white-space: nowrap; }
.notice svg { width: 11px; height: 10px; margin-right: 3px; }
.notice strong { font-size: 8px; }
.notice span { margin-left: 11px; padding-right: 15px; border-right: 1px solid #ccc; line-height: 16px; }
.notice a { color: #1676b5; text-decoration: none; margin-left: 8px; }

.bar { width: 256px; height: 17px; display: flex; align-items: center; background: #f1f1ef; border: 1px solid #e4e4e2; border-bottom-color: #ccc; padding: 0 5px 0 3px; font-family: Roboto, sans-serif; color: #666; }
.bar span { flex: 1; }
.dbl { width: 7px; height: 5px; margin-right: 6px; }
.round { width: 10px; } .round svg { width: 7px; height: 7px; }
.browser { position: absolute; left: 3px; top: 2px; }
.comments { position: absolute; left: 3px; bottom: 3px; padding-left: 15px; }
.tree { list-style: none; margin: 4px 0 0; padding: 0; display: flex; flex-direction: column; gap: 3px; }
.tree li { height: 13px; display: flex; align-items: center; padding-left: 23px; }
.tree .root { padding-left: 10px; }
.tri { width: 8px; height: 10px; margin-right: 5px; }
.root .tri { height: 8px; margin-right: 6px; }
.pill { height: 13px; display: flex; align-items: center; background: #f1f1ef; padding: 0 6px 0 1px; position: relative; }
.ic { width: 11px; height: 11px; }
.root .ic { width: 10px; }
.root .pill { padding-right: 4px; }
.eye { margin-right: 6px; }
.tl { margin-left: 7px; }
.eye ~ .tl { margin-left: 9px; }
.folderonly .tl { margin-left: 10px; }
.rootname { display: flex; align-items: center; height: 11px; background: #8e8e8c; color: #fff; font-weight: 700; font-size: 8px; gap: 9px; margin-left: 5px; padding: 0 5px 0 2px; }
.cubeic { width: 11px; height: 11px; }
.radio { width: 10px; height: 10px; margin-left: 2px; }
.hatched::after { content: ""; position: absolute; left: 16px; right: 1px; bottom: 1px; height: 3px; background: repeating-linear-gradient(135deg, #7f96bb 0, #7f96bb 1px, transparent 1px, transparent 3px); }

.panel { position: absolute; right: 0; top: 82px; width: 165px; background: #f1f1ef; border: 1px solid #d9d9d7; border-right: 0; }
.phead { height: 16px; display: flex; align-items: center; padding: 0 2px 0 7px; border-bottom: 1px solid #d0d0ce; font-family: Roboto, sans-serif; color: #555; }
.phead span { flex: 1; }
.phead svg:first-child { width: 7px; height: 7px; margin-right: 2px; }
.phead .dbl { margin: 0; }
.prow { height: 20px; display: flex; align-items: center; padding-left: 8px; }
.prow label { width: 69px; white-space: nowrap; flex: none; }
.prow input[type=text] { width: 66px; height: 18px; background: #fff; border: 1px solid #d5d5d3; padding: 0 2px; }
.pick { width: 47px; height: 18px; background: #fff; border: 1px solid #d8d8d6; gap: 3px; }
.pick svg { width: 7px; height: 10px; }
.clear { width: 20px; } .clear svg { width: 7px; height: 7px; }
.flipbtn { width: 15px; } .flipbtn svg { width: 10px; height: 10px; }
.selwrap { position: relative; width: 66px; height: 18px; }
.selwrap select { width: 100%; height: 100%; appearance: none; background: #fff; border: 1px solid #d5d5d3; padding-left: 4px; }
.selwrap .caret { position: absolute; right: 3px; top: 8px; pointer-events: none; }
.prow input[type=checkbox] { appearance: none; width: 9px; height: 9px; border: 1px solid #444; border-radius: 2px; background: #ddd; margin-left: 3px; position: relative; }
.prow input[type=checkbox]:checked::after { content: ""; position: absolute; left: 2px; top: 0; width: 3px; height: 5px; border: solid #222; border-width: 0 1px 1px 0; transform: rotate(42deg); }
.pfoot { height: 24px; border-top: 1px solid #cfcfcd; display: flex; align-items: center; gap: 6px; padding: 0 7px 0 5px; font-size: 8px; color: #666; }
.pfoot svg { width: 8px; height: 8px; margin-right: auto; }
.pfoot button { width: 40px; height: 13px; border: 1px solid #c8c8c6; background: #eeeeec; }

.valuebox { position: absolute; left: 631px; top: 470px; height: 14px; display: flex; align-items: center; background: #f1f1ef; }
.grip { width: 5px; height: 12px; margin: 0 2px; background: repeating-linear-gradient(90deg, #d2d2d0 0, #d2d2d0 1px, #eee 1px, #eee 2px); }
.valuefield { width: 46px; height: 13px; display: flex; align-items: center; justify-content: center; background: #fff; border: 1px solid #d6d6d4; }
.valuefield input { width: 28px; height: 9px; background: #0878d2; color: #fff; text-align: center; }
.valuebox button { width: 16px; } .valuebox button svg { width: 3px; height: 9px; }
.navbar { position: absolute; left: 560px; bottom: 4px; height: 16px; display: flex; align-items: center; background: #f1f1ef; }
.navbar button { width: 17px; height: 16px; gap: 2px; }
.navbar .wide { width: 21px; }
.navbar .wide:first-child { width: 22px; }
.navbar svg { width: 12px; height: 12px; }
.planelabel { position: absolute; right: 8px; bottom: 5px; }

.timeline { height: 27px; display: flex; align-items: center; background: #f0f0ee; border-top: 1px solid #dededc; padding: 5px 5px 0 3px; flex: none; }
.play { display: flex; width: 91px; padding-right: 9px; justify-content: space-between; }
.play button { width: 16px; height: 16px; } .play svg { width: 11px; height: 11px; }
.features { display: flex; flex: 1; align-self: stretch; position: relative; }
.features button { width: 16px; height: 21px; align-items: flex-start; padding-top: 4px; border-bottom: 1px solid #bbb; background: linear-gradient(#bbb, #bbb) center bottom / 1px 3px no-repeat; }
.features button svg { width: 12px; height: 12px; }
.features .marker { width: 8px; height: 21px; margin-left: -4px; }
.settings svg { width: 11px; height: 11px; }
</style>
